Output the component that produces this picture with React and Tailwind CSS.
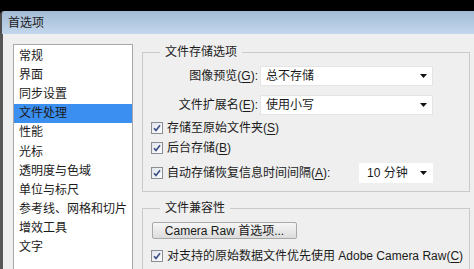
const categories = [
  '常规',
  '界面',
  '同步设置',
  '文件处理',
  '性能',
  '光标',
  '透明度与色域',
  '单位与标尺',
  '参考线、网格和切片',
  '增效工具',
  '文字',
]

const font = { fontFamily: '"Liberation Sans", "Noto Sans CJK SC", sans-serif' }

const Key = ({ children }) => <span className="underline underline-offset-2">{children}</span>

const CheckBox = () => (
  <svg width="12" height="12" viewBox="0 0 12 12" className="shrink-0">
    <defs>
      <linearGradient id="cb" x1="0" y1="0" x2="1" y2="1">
        <stop offset="0" stopColor="#dfe3ea" />
        <stop offset="1" stopColor="#ffffff" />
      </linearGradient>
    </defs>
    <rect x="0.5" y="0.5" width="11" height="11" fill="url(#cb)" stroke="#8a8d92" />
    <path d="M3 6.2 L5 8.4 L9 3.2" fill="none" stroke="#3b4f86" strokeWidth="1.6" />
  </svg>
)

const Arrow = () => (
  <svg width="7" height="4" viewBox="0 0 7 4" className="shrink-0">
    <path d="M0 0 H7 L3.5 4 Z" fill="#111" />
  </svg>
)

const Select = ({ value, className = '' }) => (
  <div
    className={`flex h-[20px] items-center justify-between border border-[#e4e4e4] bg-white pl-[5px] pr-[5px] ${className}`}
  >
    <span>{value}</span>
    <Arrow />
  </div>
)

const CheckRow = ({ children, className = '' }) => (
  <div className={`flex items-center gap-[4px] pl-[8px] ${className}`}>
    <CheckBox />
    <span>{children}</span>
  </div>
)

const Group = ({ title, className = '', children }) => (
  <fieldset className={`border border-[#cacaca] ${className}`}>
    <legend className="ml-[17px] px-[5px] leading-[16px]">{title}</legend>
    {children}
  </fieldset>
)

export default function App() {
  return (
    <div
      className="flex h-[269px] w-[474px] flex-col overflow-hidden bg-black text-[12px] text-[#1b1b1b]"
      style={font}
    >
      <div className="h-[11px] shrink-0 bg-black" />
      <div className="flex h-[23px] shrink-0 items-center rounded-tl-[4px] border-l-[2px] border-[#4c4c4c] bg-gradient-to-b from-[#a2bbd6] to-[#c3d7ec] pl-[6px] text-[#202020]">
        首选项
      </div>
      <div className="flex flex-1 border-l-[3px] border-[#565656] bg-[#efefef] pl-[10px] leading-[16px]">
        <div className="mt-[10px] w-[120px] shrink-0 border border-[#a8a8a8] bg-white pt-[1px]">
          {categories.map((c) => (
            <div
              key={c}
              className={`flex h-[19.2px] items-center pl-[5px] ${c === '文件处理' ? 'bg-[#3a8ff0]' : ''}`}
            >
              {c}
            </div>
          ))}
        </div>
        <div className="ml-[9px] flex w-[328px] shrink-0 flex-col">
          <Group title="文件存储选项" className="mt-[10px] pb-[8px]">
            <div className="mt-[6px] flex items-center pr-[36px]">
              <span className="w-[115px] text-right">
                图像预览(<Key>G</Key>):
              </span>
              <Select value="总不存储" className="ml-auto w-[173px]" />
            </div>
            <div className="mt-[9px] flex items-center pr-[36px]">
              <span className="w-[115px] text-right">
                文件扩展名(<Key>E</Key>):
              </span>
              <Select value="使用小写" className="ml-auto w-[173px]" />
            </div>
            <CheckRow className="mt-[5px] h-[16px]">
              存储至原始文件夹(<Key>S</Key>)
            </CheckRow>
            <CheckRow className="mt-[4px] h-[16px]">
              后台存储(<Key>B</Key>)
            </CheckRow>
            <div className="mt-[7px] flex items-center pr-[36px]">
              <CheckRow>
                自动存储恢复信息时间间隔(<Key>A</Key>):
              </CheckRow>
              <Select value="10 分钟" className="ml-auto w-[74px] border-white pl-[7px]" />
            </div>
          </Group>
          <Group title="文件兼容性" className="mt-[8px] h-[80px]">
            <button
              type="button"
              className="mt-[6px] ml-[9px] flex h-[17px] w-[145px] items-center justify-center rounded-[2px] border border-[#a9a9a9] bg-gradient-to-b from-[#f6f6f6] to-[#dcdcdc] text-[12px]"
            >
              Camera Raw 首选项...
            </button>
            <CheckRow className="mt-[9px] h-[16px]">
              对支持的原始数据文件优先使用 Adobe Camera Raw(<Key>C</Key>)
            </CheckRow>
          </Group>
        </div>
      </div>
    </div>
  )
}
